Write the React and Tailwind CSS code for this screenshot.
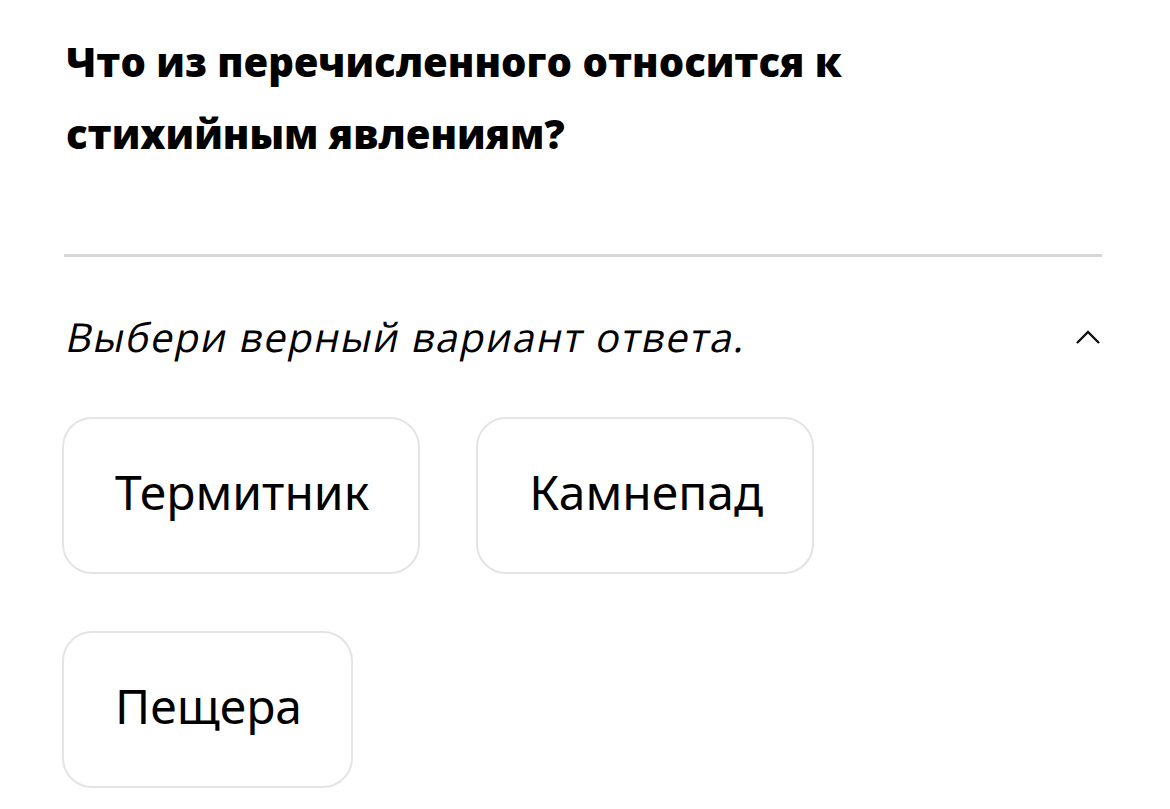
export default function App() {
  return (
    <div className="min-h-screen bg-white pl-[62px] pr-[68px] pt-[26px]" style={{ fontFamily: '"Open Sans", sans-serif' }}>
      <h1 className="text-[40px] leading-[72px] font-extrabold text-black pl-[4px]">
        Что из перечисленного относится к
        <br />
        стихийным явлениям?
      </h1>
      <div className="mt-[84px] ml-[2px] h-[3px] bg-[#d6d6d6]" />
      <div className="mt-[50px] flex items-center justify-between">
        <p className="text-[40px] leading-[60px] tracking-[1.5px] text-black -ml-[1px] origin-bottom-left -skew-x-12">Выбери верный вариант ответа.</p>
        <svg width="26" height="16" viewBox="0 0 26 16" className="mr-[1px]" fill="none">
          <path d="M2 14 L13 3 L24 14" stroke="#111" strokeWidth="2.4" />
        </svg>
      </div>
      <div className="mt-[50px] flex flex-wrap gap-x-[56px] gap-y-[57px] w-[820px]" style={{ fontFamily: '"Noto Sans", sans-serif' }}>
        {["Термитник", "Камнепад", "Пещера"].map((t) => (
          <button key={t} className="h-[157px] pl-[51px] pr-[49px] pb-[8px] rounded-[30px] border-2 border-[#e4e4e4] bg-white text-[48px] text-black leading-none">
            {t}
          </button>
        ))}
      </div>
    </div>
  );
}
